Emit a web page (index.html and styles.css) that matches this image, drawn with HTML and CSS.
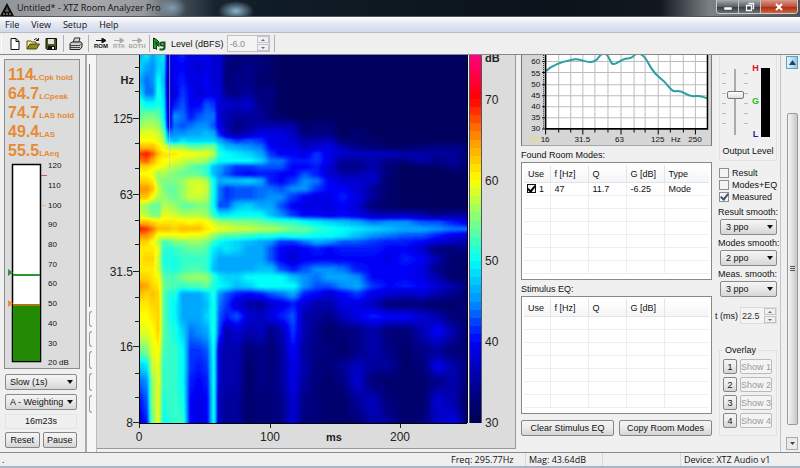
FILE: index.html
```html
<!DOCTYPE html>
<html lang="en">
<head>
<meta charset="utf-8">
<title>Untitled* - XTZ Room Analyzer Pro</title>
<link rel="stylesheet" href="styles.css">
</head>
<body>
<div class="window">
  <header class="titlebar">
    <svg class="app-icon" width="14" height="13" viewBox="0 0 14 13" aria-hidden="true">
      <path d="M7 0 L14 13 H0Z" fill="#0c0c0c"/>
      <path d="M5 8 L9 8 M7 4.500 V8" stroke="#8b8b8b"/>
      <path d="M3 11h2M6 11h2M9 11h2" stroke="#aaa"/>
    </svg>
    <h1 class="title">Untitled* - XTZ Room Analyzer Pro</h1>
    <div class="window-buttons">
      <button class="wbtn" aria-label="Minimize"><svg width="10" height="8" viewBox="0 0 10 8"><rect x="1" y="4" width="8" height="3" fill="#fff" stroke="#444" stroke-width=".5"/></svg></button>
      <button class="wbtn" aria-label="Restore"><svg width="10" height="10" viewBox="0 0 10 10"><path d="M3.500 1.500h5v5h-1M1.500 3.500h5v5h-5z" fill="none" stroke="#f4f4f4" stroke-width="1.300"/></svg></button>
      <button class="wbtn close" aria-label="Close"><svg width="10" height="8" viewBox="0 0 10 8"><path d="M2 1l6 6M8 1l-6 6" stroke="#fff" stroke-width="2"/></svg></button>
    </div>
  </header>

  <nav class="menubar">
    <button>File</button><button>View</button><button>Setup</button><button>Help</button>
  </nav>

  <div class="toolbar">
    <span class="grip"></span>
    <button class="tool" aria-label="New"><svg width="14" height="14" viewBox="0 0 14 14"><path d="M3 1.500h5l3 3V12.500H3z" fill="#fff" stroke="#111"/><path d="M8 1.500v3h3" fill="none" stroke="#111"/></svg></button>
    <button class="tool" aria-label="Open"><svg width="14" height="14" viewBox="0 0 14 14"><path d="M1 12V4h4l1 1h4v2" fill="#f4ec9a" stroke="#5c5810"/><path d="M1 12l3-5h9.500l-3 5z" fill="#8c8a28" stroke="#4a4808"/><path d="M8 3q2-3 4 0M12.500 1v2.500H10" fill="none" stroke="#222"/></svg></button>
    <button class="tool" aria-label="Save"><svg width="14" height="14" viewBox="0 0 14 14"><path d="M2 1.500h10.500v11H3l-1-1z" fill="#55551c" stroke="#111"/><rect x="4" y="2" width="6" height="5" fill="#e2e2d8"/><rect x="4" y="9" width="7" height="4" fill="#111"/><rect x="8" y="10" width="2" height="2" fill="#eee"/></svg></button>
    <span class="sep"></span>
    <button class="tool" aria-label="Print"><svg width="14" height="14" viewBox="0 0 14 14"><path d="M4 6l1.500-5H11L9.500 6" fill="#fff" stroke="#222"/><path d="M5.500 3h4M5 4.500h4" stroke="#777" stroke-width=".7"/><path d="M1 6.500l2-1.500h9l1 1.500V10l-2 2.500H1z" fill="#ccc" stroke="#222"/><path d="M1 8.500h10l2-2M1 10.500h10" fill="none" stroke="#222" stroke-width=".8"/></svg></button>
    <span class="sep"></span>
    <button class="mode"><svg width="10" height="5" viewBox="0 0 10 5"><path d="M0 2.500h7M6 0l4 2.500L6 5z" stroke="#111" fill="#111"/></svg>ROM</button>
    <button class="mode" disabled><svg width="10" height="5" viewBox="0 0 10 5"><path d="M0 2.500h7M6 0l4 2.500L6 5z" stroke="#aaa" fill="#aaa"/></svg>RTA</button>
    <button class="mode" disabled><svg width="10" height="5" viewBox="0 0 10 5"><path d="M0 2.500h7M6 0l4 2.500L6 5z" stroke="#aaa" fill="#aaa"/></svg>BOTH</button>
    <span class="sep"></span>
    <button class="tool generator" aria-label="Signal generator"><svg width="14" height="14" viewBox="0 0 14 14"><path d="M1.500 1v10.500h2l1 1V8.500H6l1 1V5L4.500 2.500z" fill="#17a52c" stroke="#08380e"/><path d="M3.500 4l2 1.500v2h-2z" fill="#08380e"/><path d="M12 5.500H10q-1.500 0-1.500 1.500T10 8.500h2M12.500 4.500v6q0 2-2 2H7.500" fill="none" stroke="#0b5818" stroke-width="2"/></svg></button>
    <label class="level-label" for="level">Level (dBFS)</label>
    <span class="spin level"><input id="level" value="-6.0" disabled><span class="arrows"><button disabled aria-label="Raise level"></button><button disabled aria-label="Lower level"></button></span></span>
    <span class="sep"></span>
  </div>

  <main class="main">
    <aside class="meter-pane">
      <section class="meter-box">
        <p class="reading"><b>114</b>LCpk hold</p>
        <p class="reading"><b>64.7</b>LCpeak</p>
        <p class="reading"><b>74.7</b>LAS hold</p>
        <p class="reading"><b>49.4</b>LAS</p>
        <p class="reading"><b>55.5</b>LAeq</p>
        <svg class="meter" width="76" height="210" viewBox="0 0 76 210" role="img" aria-label="Sound level meter">
          <rect x="6.500" y="4.500" width="28" height="197" fill="#fff" stroke="#000" stroke-width="1.500"/>
          <rect x="7" y="144" width="27" height="57" fill="#238a05"/>
          <rect x="7" y="144" width="27" height="2" fill="#a57a10"/>
          <rect x="7" y="114" width="27" height="2" fill="#2f9432"/>
          <path d="M2 109l5 3.500-5 3.500z" fill="#2f9440"/>
          <path d="M2 140l5 3.500-5 3.500z" fill="#ee8c30"/>
          <path d="M35 15.500h6" stroke="#d05050"/><path d="M35 45.500h5" stroke="#f0b080"/>
          <g class="tick-text"><text x="42" y="8">120</text><text x="42" y="28">110</text><text x="42" y="48">100</text><text x="42" y="67">90</text><text x="42" y="87">80</text><text x="42" y="107">70</text><text x="42" y="126">60</text><text x="42" y="146">50</text><text x="42" y="166">40</text><text x="42" y="186">30</text><text x="42" y="205">20 dB</text></g>
        </svg>
      </section>
      <span class="combo"><select aria-label="Time constant"><option>Slow (1s)</option></select></span>
      <span class="combo"><select aria-label="Weighting"><option>A - Weighting</option></select></span>
      <p class="elapsed">16m23s</p>
      <div class="pair"><button class="btn">Reset</button><button class="btn">Pause</button></div>
    </aside>
    <div class="splitter"><i class="rail"></i><i></i><i></i><i class="tall"></i><i class="tall"></i><i class="tall"></i></div>

    <section class="spectrogram">
      <svg class="freq-axis" width="43" height="376" viewBox="0 0 43 376" aria-hidden="true">
        <path d="M38 12.500h4M38 36.500h4M36 63.500h6M38 88.500h4M38 113.500h4M36 139.500h6M38 165.500h4M38 189.500h4M36 216.500h6M38 242.500h4M38 266.500h4M36 291.500h6M38 318.500h4M38 342.500h4M36 367.500h6" stroke="#222"/>
        <path d="M42.500 0V368" stroke="#000"/>
        <g class="axis-text" text-anchor="end"><text x="37" y="29" class="unit">Hz</text><text x="36" y="68">125</text><text x="36" y="144">63</text><text x="36" y="221">31.5</text><text x="36" y="296">16</text><text x="36" y="372">8</text></g>
      </svg>
      <canvas id="heat" width="326" height="367" role="img" aria-label="Level by time and frequency"></canvas>
      <svg class="level-axis" width="48" height="376" viewBox="0 0 48 376" aria-hidden="true">
        <rect width="1" height="368" fill="#000"/><rect x="1" width="2" height="368" fill="#eee"/>
        <g id="scale" shape-rendering="crispEdges"></g>
        <path d="M2.500 0V368M14.500 0V368" stroke="#556"/>
        <g class="axis-text"><text x="18" y="7" class="unit">dB</text><text x="18" y="49">70</text><text x="18" y="130">60</text><text x="18" y="210">50</text><text x="18" y="291">40</text><text x="18" y="372">30</text></g>
      </svg>
      <svg class="time-axis" width="418" height="25" viewBox="0 0 418 25" aria-hidden="true">
        <path d="M42.500 0v5M173.500 0v5M303.500 0v5" stroke="#222"/><path d="M42 .500H370" stroke="#000"/>
        <g class="axis-text" text-anchor="middle"><text x="42" y="18">0</text><text x="173" y="18">100</text><text x="237" y="18" class="unit">ms</text><text x="303" y="18">200</text></g>
      </svg>
    </section>

    <section class="modes">
      <svg class="response" viewBox="0 0 190 91" role="img" aria-label="Frequency response">
        <rect width="190" height="91" fill="#d6d6d6"/>
        <rect x="24" width="162" height="74" fill="#fff"/>
        <path d="M37.500 0v74M49.500 0v74M61.500 0v74M73.500 0v74M86.500 0v74M99.500 0v74M112.500 0v74M123.500 0v74M136.500 0v74M148.500 0v74M161.500 0v74M173.500 0v74M24 6.500h161M24 17.500h161M24 29.500h161M24 40.500h161M24 51.500h161M24 62.500h161" stroke="#bdbdbd"/>
        <path d="M25 16C31 10 39 7 50 5C57 2 61 7 69 7C77 7 77 0 81-1C85-2 86 0 89 6C92 13 96 6 103 4C108 3 110 4 113 0C118-3 122 0 126 7C131 17 136 21 142 26C147 31 150 37 154 36C161 34 163 41 171 41C178 40 179 41 185 43" fill="none" stroke="#2aa0a4" stroke-width="2"/>
        <path d="M24.500 0V73.500H185.500V0" fill="none" stroke="#000" stroke-width="1.500"/>
        <path d="M21 6.500h3M21 17.500h3M21 29.500h3M21 40.500h3M21 51.500h3M21 62.500h3M21 73.500h3M24.500 74v5M37.500 74v3M49.500 74v3M61.500 74v5M73.500 74v3M86.500 74v3M99.500 74v5M112.500 74v3M123.500 74v3M136.500 74v5M148.500 74v3M161.500 74v3M173.500 74v5" stroke="#000"/>
        <path d="M22.500 0v74" stroke="#222" stroke-dasharray="1 1"/>
        <g class="tick-text" text-anchor="end"><text x="19" y="9">60</text><text x="19" y="21">55</text><text x="19" y="32">50</text><text x="19" y="43">45</text><text x="19" y="54">40</text><text x="19" y="65">35</text><text x="19" y="76">30</text></g>
        <g class="tick-text" text-anchor="middle"><text x="14" y="87" class="faint">dB</text><text x="24" y="87">16</text><text x="61" y="87">31.5</text><text x="98" y="87">63</text><text x="136" y="87">125</text><text x="154" y="87">Hz</text><text x="173" y="87">250</text></g>
        <path d="M.500 0V90.500H189.500V0" fill="none" stroke="#777"/>
      </svg>

      <h2 class="caption">Found Room Modes:</h2>
      <div class="list">
        <table>
          <colgroup><col class="c1"><col class="c2"><col class="c2"><col class="c2"><col></colgroup>
          <thead><tr><th>Use</th><th>f [Hz]</th><th>Q</th><th>G [dB]</th><th>Type</th></tr></thead>
          <tbody>
            <tr><td><label class="use"><input type="checkbox" checked>1</label></td><td>47</td><td>11.7</td><td>-6.25</td><td>Mode</td></tr>
            <tr><td></td><td></td><td></td><td></td><td></td></tr>
            <tr><td></td><td></td><td></td><td></td><td></td></tr>
            <tr><td></td><td></td><td></td><td></td><td></td></tr>
            <tr><td></td><td></td><td></td><td></td><td></td></tr>
            <tr><td></td><td></td><td></td><td></td><td></td></tr>
            <tr><td></td><td></td><td></td><td></td><td></td></tr>
          </tbody>
        </table>
      </div>

      <h2 class="caption">Stimulus EQ:</h2>
      <div class="list">
        <table>
          <colgroup><col class="c1"><col class="c2"><col class="c2"><col class="c2"><col></colgroup>
          <thead><tr><th>Use</th><th>f [Hz]</th><th>Q</th><th>G [dB]</th><th></th></tr></thead>
          <tbody>
            <tr><td></td><td></td><td></td><td></td><td></td></tr>
            <tr><td></td><td></td><td></td><td></td><td></td></tr>
            <tr><td></td><td></td><td></td><td></td><td></td></tr>
            <tr><td></td><td></td><td></td><td></td><td></td></tr>
            <tr><td></td><td></td><td></td><td></td><td></td></tr>
            <tr><td></td><td></td><td></td><td></td><td></td></tr>
            <tr><td></td><td></td><td></td><td></td><td></td></tr>
          </tbody>
        </table>
      </div>
      <div class="pair actions"><button class="btn">Clear Stimulus EQ</button><button class="btn">Copy Room Modes</button></div>
    </section>

    <aside class="controls">
      <section class="output">
        <div class="fader">
          <span class="notches"></span>
          <input id="output" type="range" min="0" max="100" value="60">
          <span class="notches"></span>
          <span class="hgl"><b class="h">H</b><b class="g">G</b><b class="l">L</b></span>
          <span class="vu"></span>
        </div>
        <label for="output">Output Level</label>
      </section>
      <div class="checks">
        <label><input type="checkbox">Result</label>
        <label><input type="checkbox">Modes+EQ</label>
        <label><input type="checkbox" checked>Measured</label>
      </div>
      <div class="smooth">
        <label for="s1">Result smooth:</label>
        <span class="combo"><select id="s1"><option>3 ppo</option></select></span>
        <label for="s2">Modes smooth:</label>
        <span class="combo"><select id="s2"><option>2 ppo</option></select></span>
        <label for="s3">Meas. smooth:</label>
        <span class="combo"><select id="s3"><option>3 ppo</option></select></span>
      </div>
      <div class="time"><label for="t">t (ms)</label><span class="spin"><input id="t" value="22.5"><span class="arrows"><button aria-label="Increase time"></button><button aria-label="Decrease time"></button></span></span></div>
      <fieldset class="overlay">
        <legend>Overlay</legend>
        <div><button class="btn num">1</button><button class="btn show" disabled>Show 1</button></div>
        <div><button class="btn num">2</button><button class="btn show" disabled>Show 2</button></div>
        <div><button class="btn num">3</button><button class="btn show" disabled>Show 3</button></div>
        <div><button class="btn num">4</button><button class="btn show" disabled>Show 4</button></div>
      </fieldset>
    </aside>

    <div class="scrollbar">
      <button class="up" aria-label="Scroll up"><svg width="7" height="5" viewBox="0 0 7 5"><path d="M3.500 0L7 5H0z" fill="#2b3f5c"/></svg></button>
      <span class="thumb"></span>
      <button aria-label="Scroll down"><svg width="7" height="5" viewBox="0 0 7 5"><path d="M1 1h5L3.500 4z" fill="#444"/></svg></button>
    </div>
  </main>

  <footer class="status"><span class="dot">.</span><span class="freq">Freq: 295.77Hz</span><span class="mag">Mag: 43.64dB</span><span class="blank"></span><span class="device">Device: XTZ Audio v1</span></footer>
</div>
<script src="script.js"></script>
</body>
</html>
```

FILE: styles.css
```css
* { box-sizing: border-box; }
html, body { height: 100%; }
body {
  margin: 0;
  font: 9px/12px "Liberation Sans", Arial, sans-serif;
  color: #111;
  background: #f0f0f0;
}
h1, h2, p { margin: 0; font: inherit; }
button, input, select { font: inherit; color: inherit; margin: 0; padding: 0; border: 0; background: none; border-radius: 0; }
.window { display: flex; flex-direction: column; min-height: 100vh; }

.titlebar {
  display: flex; align-items: center; height: 17px;
  background:
    radial-gradient(ellipse 18px 10px at 236px 11px, #8fb4cb, transparent),
    radial-gradient(ellipse 14px 10px at 172px 8px, #7f9caf, transparent),
    linear-gradient(90deg, #8f9498 0, #a7a9ac 90px, #95999d 145px, #3d4a54 185px, #182530 215px, #101c26 260px, #0b131b 560px, #12181e 660px, #7c8186 710px, #4b5157 100%);
  border-bottom: 1px solid #55585c;
}
.app-icon { margin-top: 3px; }
.title { margin-left: 3px; flex: 1; font: 9px/16px "Open Sans", sans-serif; }
.window-buttons { display: flex; align-self: flex-start; height: 14px; margin-right: 2px; border: 1px solid #c8ccd0; border-top: 0; border-radius: 0 0 4px 4px; overflow: hidden; }
.wbtn { display: flex; align-items: center; justify-content: center; width: 22px; background: linear-gradient(#a5a9ad, #5d6267 50%, #33383d 51%, #6d7277); border-right: 1px solid #c0c4c8; }
.wbtn.close { width: 36px; border: 0; background: linear-gradient(#d99a88, #c0503a 50%, #a52a12 51%, #d2643c); }

.menubar { display: flex; height: 16px; background: linear-gradient(#fdfdff, #e4e8f4 45%, #d3d8ea); border-bottom: 1px solid #b9bcc8; font: 9px/14px "Open Sans", sans-serif; padding-left: 5px; gap: 12px; }

.toolbar { display: flex; align-items: center; height: 21px; background: #f0efef; padding-left: 1px; }
.grip { width: 1px; height: 18px; background: #bbb; border-right: 1px solid #fff; margin-right: 4px; }
.sep { width: 1px; height: 17px; background: #b0b0b0; margin: 0 3px; }
.tool { display: flex; width: 18px; height: 18px; align-items: center; justify-content: center; }
.tool.generator { margin-left: -3px; }
.mode { display: flex; flex-direction: column; align-items: center; width: 18px; font: bold 6px/7px "Liberation Sans", sans-serif; }
.mode:disabled { color: #a5a5a5; }
.level-label { margin: 0 3px 0 3px; }
.spin { display: flex; border: 1px solid #dcdcdc; background: #f4f4f4; }
.spin input { width: 26px; height: 15px; padding-left: 2px; color: #333; }
.spin input:disabled { color: #8b8b8b; }
.spin.level { margin-right: 1px; border-color: #c0c0c0; }
.spin.level input { width: 29px; }
.arrows { display: flex; flex-direction: column; gap: 1px; width: 12px; }
.arrows button { display: grid; place-items: center; flex: 1; border: 1px solid #c4c4c8; background: #f0f0f2; }
.arrows button::before { content: ""; border: 2px solid transparent; border-top: 0; border-bottom-color: #667; }
.arrows button:last-child::before { border-top: 2px solid #667; border-bottom: 0; }

.main { display: flex; flex: 1; border-top: 1px solid #888; }
.meter-pane { display: flex; flex-direction: column; width: 87px; padding: 4px 5px 0 4px; border-right: 2px solid #aaa; }
.meter-box { background: #dcdcdc; border: 1px solid #8d8d8d; padding: 5px 0 0 1px; height: 310px; margin-bottom: 5px; }
.reading { height: 19px; padding-left: 2px; color: #e58b35; font: bold 8px/19px "Liberation Sans", sans-serif; white-space: nowrap; }
.reading b { font-size: 16px; }
.meter { display: block; }
.tick-text { font: 8px "Liberation Sans", sans-serif; fill: #111; }
.faint { fill: #e6e070; }
.axis-text { font: 12px "Liberation Sans", sans-serif; fill: #222; }
.unit { font-weight: bold; font-size: 11px; }

.combo { position: relative; display: block; height: 16px; }
.combo select { appearance: none; display: block; width: 100%; height: 16px; padding-left: 5px; border: 1px solid #8a8a8a; border-radius: 2px; background: linear-gradient(#f5f5f5, #e8e8e8 50%, #d6d6d6); }
.combo::after { content: ""; position: absolute; right: 4px; top: 6px; border: 3px solid transparent; border-top: 4px solid #111; border-bottom: 0; pointer-events: none; }
.meter-pane .combo { margin: 0 3px 4px 1px; }
.meter-pane .combo select { padding-left: 4px; }
.elapsed { height: 15px; margin: 0 3px 3px 1px; border: 1px solid #e4e4e4; text-align: center; }
.pair { display: flex; gap: 3px; margin: 0 3px 0 1px; }
.btn { flex: 1; height: 16px; border: 1px solid #868686; border-radius: 2px; background: linear-gradient(#f5f5f5, #ebebeb 50%, #d4d4d4); white-space: nowrap; }

.splitter { width: 10px; padding: 9px 0 0 2px; border-right: 1px solid #bbb; display: flex; flex-direction: column; gap: 4px; background: #f6f6f6; }
.splitter i { width: 3px; height: 16px; border: 1px solid #999; border-right: 0; border-radius: 3px 0 0 3px; }
.splitter .rail { height: 243px; border-radius: 0; border: 0; border-left: 1px solid #777; }
.splitter .tall { height: 18px; }

.spectrogram { display: grid; grid-template-columns: 43px 1fr 48px; grid-template-rows: 368px 25px; flex: 1; align-self: flex-start; background: #dcdcdc; border: 1px solid #999; border-width: 0 1px 1px 0; }
.spectrogram svg { display: block; }
.spectrogram canvas { width: 100%; height: 368px; display: block; }
.time-axis { grid-column: 1 / -1; width: 100%; position: relative; }
.freq-axis, .level-axis { position: relative; z-index: 1; }

.modes { width: 191px; margin-left: 5px; }
.response { display: block; width: 100%; }
.caption { height: 16px; line-height: 18px; }
.list { height: 118px; border: 1px solid #888; background: #fff; padding: 2px; margin: 0; }
.list table { width: 100%; table-layout: fixed; border-collapse: collapse; }
.c1 { width: 26px; } .c2 { width: 38px; }
th { height: 17px; padding: 0 0 0 4px; text-align: left; font-weight: normal; background: linear-gradient(#fff, #f4f5f7); border: solid #e2e4e8; border-width: 0 1px 1px 0; }
td { height: 13px; line-height: 12px; padding: 0 0 0 4px; border: solid #eee; border-width: 0 1px 1px 0; white-space: nowrap; }
th:last-child, td:last-child { border-right: 0; }
input[type=checkbox] { appearance: none; width: 10px; height: 10px; border: 1px solid #8c9095; background: #f4f4f4; display: grid; place-items: center; flex: none; }
input[type=checkbox]:checked::before { content: ""; width: 3px; height: 6px; border: solid #405078; border-width: 0 2px 2px 0; rotate: 40deg; translate: 0 -1px; }
.use { display: flex; align-items: center; gap: 3px; margin-left: -1px; }
.use input[type=checkbox] { width: 9px; height: 9px; border-color: #111; }
.use input[type=checkbox]:checked::before { border-color: #000; }
.modes .list + .actions { margin: 6px 0 0; gap: 5px; }

.controls { width: 65px; padding-left: 7px; }
.output { border: 1px solid #e2e2e2; border-top: 0; height: 106px; text-align: center; white-space: nowrap; }
.fader { display: flex; height: 90px; padding: 9px 0 6px 2px; }
.notches { width: 4px; margin: 9px 0; background: repeating-linear-gradient(#bbb 0 1px, transparent 1px 10px); }
#output { appearance: none; writing-mode: vertical-lr; direction: rtl; width: 18px; height: 75px; margin: 0; background: linear-gradient(90deg, transparent 8px, #aaa 8px 10px, transparent 10px) 0 5px / 100% 66px no-repeat; }
#output::-webkit-slider-thumb { appearance: none; width: 17px; height: 8px; border: 1px solid #777; border-radius: 2px; background: linear-gradient(#fff, #ddd); }
.hgl { display: flex; flex-direction: column; justify-content: space-between; width: 9px; margin-left: 3px; font: bold 9px/9px "Liberation Sans", sans-serif; }
.h { color: #d01818; } .g { color: #18c028; } .l { color: #1c1c98; }
.vu { width: 9px; margin: 4px 0 2px 1px; background: #000; }
.checks { padding-top: 6px; }
.checks label { display: flex; align-items: center; gap: 3px; height: 12px; white-space: nowrap; }
.smooth { padding: 1px 0 0 1px; }
.smooth label { display: block; height: 14px; line-height: 16px; white-space: nowrap; margin-left: -2px; }
.smooth .combo { margin-top: 1px; }
.time { display: flex; align-items: center; gap: 2px; margin: 10px 0 20px -4px; white-space: nowrap; }
.time .spin { margin-left: auto; }
.time .spin input { width: 23px; padding-left: 1px; }
.overlay { margin: 0; min-width: 0; border: 1px solid #e2e2e2; padding: 3px 4px 7px 3px; display: flex; flex-direction: column; gap: 3px; }
.overlay legend { padding: 0 2px; }
.overlay div { display: flex; gap: 3px; }
.overlay .btn { height: 15px; }
.overlay .num { flex: none; width: 14px; }
.overlay .show { color: #999; border-color: #bbb; background: #f4f4f4; }

.scrollbar { display: flex; flex-direction: column; align-items: center; width: 20px; margin-left: 3px; padding: 1px 2px 2px 5px; border-left: 1px solid #c4c4c4; }
.scrollbar button { display: grid; place-items: center; width: 12px; height: 13px; border: 1px solid #aaa; background: #eaeaea; }
.scrollbar .up { border-color: #5f9fc0; background: linear-gradient(90deg, #e0f4fd, #8fcbea); }
.thumb { flex: 1; width: 11px; margin: 44px 0 12px; border: 1px solid #999; border-radius: 2px; background: repeating-linear-gradient(#555 0 1px, transparent 1px 2px) center / 5px 6px no-repeat, linear-gradient(90deg, #f5f5f5, #c8c8cc); }

.status { display: flex; height: 16px; border-top: 1px solid #888; border-bottom: 2px solid #aab4c4; background: #f0efef; font: 9px/14px "Open Sans", sans-serif; }
.status span { border-right: 1px solid #d8d8d8; white-space: nowrap; }
.status .dot { border: 0; padding-left: 2px; flex: 1; }
.status .freq { width: 75px; }
.status .mag { width: 77px; padding-left: 3px; }
.status .blank { width: 78px; }
.status .device { width: 119px; padding-left: 3px; border: 0; }
```

FILE: script.js
```js
// Sample positions, in plot pixels, and the level in dB at each of them.
const xs = [140,146,152,158,163,168,174,182,190,198,206,213,219,226,236,248,260,270,280,292,304,316,328,342,356,372,388,404,420,436,452,466].map(v => v - 140);
const rows = `
55: 47 49 46 48 49 37 40 41 39 39 40 38 38 34 33 33 33 32 31
66: 48 46 45 48 48 37 40 40 39 38 39 38 38 33 33 34 33 32 31
80: 46 44 45 50 47 36 40 41 39 39 40 38 38 33 34 34 32 32 31
92: 48 44 44 51 48 36 39 42 40 38 39 39 38 34 34 35 33 34 31
104: 52 50 50 51 49 37 41 43 40 40 43 42 38 38 37 38 34 33 31
116: 54 55 55 54 50 38 45 44 41 43 44 44 38 36 35 35 35 33 32 31
125: 56 57 57 56 52 39 44 43 44 45 45 43 39 36 34 35 36 36 36 36 32 33 33 31
133: 59 59 59 58 55 44 45 45 46 46 47 46 41 37 35 37 39 39 39 37 33 34 34 31 33 31
140: 60 60 60 59 57 48 47 49 48 48 48 48 46 44 42 43 42 39 39 38 36 36 37 33 32 32 31
146: 63 63 63 61 59 57 56 56 54 54 55 55 49 47 46 45 44 40 39 39 37 38 39 36 34 33 32 32 33 34 34 33
153: 68 69 67 63 61 61 61 60 60 59 59 57 51 50 49 48 46 42 40 40 39 42 39 38 37 37 37 36 36 35 35 33
160: 66 67 64 61 60 60 59 58 57 57 56 53 50 50 50 50 48 44 44 41 41 42 39 35 35 36 34 34 36 34 35 33
166: 62 62 61 60 59 58 57 56 54 53 52 47 46 44 42 42 43 43 43 40 40 41 38 34 34 36 33 31 32 32 34 32
173: 60 60 59 56 57 56 55 54 54 54 52 47 45 43 41 40 41 41 40 40 43 41 38 36 36 37 33 31
180: 62 62 61 56 55 55 55 56 58 58 57 50 46 47 47 48 46 41 40 42 45 44 40 38 38 37 32 31
188: 65 65 63 58 55 54 54 56 58 59 58 50 44 42 43 43 44 44 43 45 45 42 40 40 38 35 32 31
196: 63 63 60 57 56 55 54 56 58 58 57 50 44 42 43 43 44 45 45 42 40 39 39 41 39 35 32 31
205: 57 56 54 54 57 57 56 54 54 55 55 50 43 43 47 48 46 46 43 40 39 39 39 40 38 33 32 31
214: 58 57 55 55 59 59 58 57 57 57 56 52 49 49 50 50 50 47 45 42 40 40 39 40 39 37 36 37 36 34 35 35
221: 63 63 62 61 61 61 61 61 60 61 60 58 56 56 55 55 54 53 52 52 50 49 48 47 46 44 45 45 43 43 41 39
228: 69 68 66 63 63 63 62 63 63 63 61 60 59 59 58 58 57 57 56 54 54 52 51 50 49 48 47 46 46 45 44 44
235: 65 65 63 59 59 59 59 60 59 59 58 56 54 53 53 52 51 51 50 51 51 50 50 49 47 45 44 43 43 41 39 38
241: 62 62 60 57 53 53 55 55 56 56 55 52 50 49 48 47 46 45 42 42 44 46 45 43 43 42 41 41 40 38 37 36
248: 61 61 61 59 52 51 52 53 54 54 53 49 48 49 48 46 46 43 40 39 40 41 40 41 41 41 40 40 38 33 33 34
258: 61 62 62 58 51 51 51 52 52 52 52 48 46 46 46 46 46 43 40 38 40 40 40 40 40 40 39 41 40 36 32 32
268: 61 61 61 58 52 51 51 52 53 53 52 47 46 46 46 46 47 47 43 41 43 45 45 44 41 40 40 40 39 34 32 32
276: 62 62 61 60 54 53 53 55 56 56 56 52 49 48 48 50 50 50 50 47 45 44 46 46 45 40 40 40 39 36 32 32
285: 65 64 62 61 55 53 53 52 53 53 54 51 50 49 47 48 50 50 50 50 45 43 43 45 46 42 40 41 40 38 36 33
293: 63 62 63 62 54 51 51 46 46 46 48 51 45 43 41 40 41 43 44 46 41 40 38 40 42 39 38 37 38 36 34 32
303: 61 61 62 62 54 51 50 46 46 46 47 51 44 42 38 36 35 38 39 41 38 36 36 39 39 37 33 33 33 32 32 33
315: 60 60 61 62 54 51 50 46 46 46 48 51 43 41 43 38 37 39 41 43 36 35 34 37 39 41 40 40 38 36 33 33
330: 59 59 60 62 54 52 51 48 44 45 46 51 42 36 38 36 37 34 36 42 36 34 32 33 34 36 33 33 36 40 36 32
350: 54 55 59 60 53 52 52 50 42 42 43 50 37 36 36 33 34 33 35 40 35 34 33 32 34 36 34 32 34 35 33 33
365: 48 49 58 59 52 52 52 50 42 41 42 50 37 36 36 32 34 33 35 39 36 33 33 35 37 35 35 32 33 39 36 33
380: 44 45 56 59 52 52 52 50 41 40 41 50 37 36 36 32 34 33 35 39 35 33 32 34 38 33 32 32 32 34 36 33
400: 41 43 56 59 51 52 52 51 40 39 40 50 36 35 35 32 33 33 34 38 34 33 32 32 35 37 33 32 32 38 36 32
422: 39 41 55 59 50 51 52 52 40 39 40 50 36 35 35 32 33 33 34 38 33 33 32 32 33 36 35 32 33 37 39 33
`.trim().split('\n').map(line => {
  const [y, v] = line.split(': ');
  const levels = v.split(' ').map(Number);
  while (levels.length < xs.length) levels.push(31);
  return { y: y - 55, levels };
});

// Palette stops: dB, red, green, blue.
const stops = [[30,0,0,80],[34,0,0,135],[40,0,0,248],[42,0,50,255],[45,0,145,255],[50,0,255,250],[55,125,255,130],[60,255,255,0],[65,255,150,0],[70,255,0,0],[76,255,0,140]];
function colour(db) {
  const v = Math.max(30, Math.min(76, db));
  let i = 1;
  while (i < stops.length - 1 && stops[i][0] < v) i++;
  const a = stops[i - 1], b = stops[i], t = (v - a[0]) / (b[0] - a[0]);
  return [1, 2, 3].map(k => Math.round(a[k] + (b[k] - a[k]) * t));
}
const ease = t => (t + t * t * (3 - 2 * t)) / 2;

const canvas = document.getElementById('heat');
const ctx = canvas.getContext('2d');
const image = ctx.createImageData(canvas.width, canvas.height);
for (let y = 0, r = 0; y < canvas.height; y++) {
  while (r < rows.length - 2 && rows[r + 1].y <= y) r++;
  const ty = ease((y - rows[r].y) / (rows[r + 1].y - rows[r].y));
  for (let x = 0, c = 0; x < canvas.width; x++) {
    while (c < xs.length - 2 && xs[c + 1] <= x) c++;
    const tx = ease((x - xs[c]) / (xs[c + 1] - xs[c]));
    const top = rows[r].levels, low = rows[r + 1].levels;
    const a = top[c] + (top[c + 1] - top[c]) * tx;
    const b = low[c] + (low[c + 1] - low[c]) * tx;
    const db = Math.round((a + (b - a) * ty) * 2) / 2;
    image.data.set([...colour(db), 255], (y * canvas.width + x) * 4);
  }
}
ctx.putImageData(image, 0, 0);
// Time cursor.
const line = ctx.createLinearGradient(0, 0, 0, 367);
line.addColorStop(0, 'rgba(170,170,255,.7)');
line.addColorStop(0.25, 'rgba(170,190,255,.55)');
line.addColorStop(0.5, 'rgba(200,220,200,.2)');
line.addColorStop(1, 'rgba(120,200,200,.3)');
ctx.fillStyle = line;
ctx.fillRect(29, 0, 1, 367);

// Colour scale, one block per dB.
const scale = document.getElementById('scale');
for (let db = 30; db < 76; db++) {
  const rect = document.createElementNS('http://www.w3.org/2000/svg', 'rect');
  const y = Math.max(0, 368 - (db - 29) * 8.1);
  rect.setAttribute('x', 3);
  rect.setAttribute('width', 11);
  rect.setAttribute('y', y);
  rect.setAttribute('height', 368 - (db - 30) * 8.1 - y);
  rect.setAttribute('fill', `rgb(${colour(db + 0.5)})`);
  scale.append(rect);
}
```
